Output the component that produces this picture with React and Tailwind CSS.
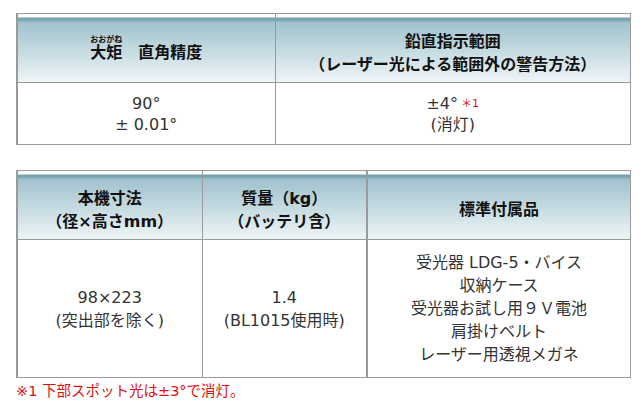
const HEAD_BG =
  "bg-[linear-gradient(to_bottom,#ffffff_0px,#ffffff_3px,#6f9cab_3px,#86adba_7px,#9fc1cc_7px,#eef5f7_100%)]";

const th = `border border-[#9a9a9a] ${HEAD_BG} text-center align-middle font-bold text-[16px] leading-[23px] text-[#111] pt-[9px]`;
const td = "border border-[#9a9a9a] bg-white text-center align-middle text-[16px] text-[#333]";

function Table1() {
  return (
    <table className="w-[615px] table-fixed border-collapse border-l-2 border-l-[#9a9a9a]">
      <colgroup>
        <col className="w-[258px]" />
        <col />
      </colgroup>
      <thead>
        <tr className="h-[69px]">
          <th className={th}>
            <ruby className="[ruby-position:over]">
              大矩<rt className="text-[8px] font-bold leading-[10px]">おおがね</rt>
            </ruby>
            {"　直角精度"}
          </th>
          <th className={th}>
            鉛直指示範囲
            <br />
            （レーザー光による範囲外の警告方法）
          </th>
        </tr>
      </thead>
      <tbody>
        <tr className="h-[62px]">
          <td className={`${td} leading-[21px]`}>
            90°
            <br />± 0.01°
          </td>
          <td className={`${td} leading-[21px]`}>
            ±4°
            <sup className="relative -top-[2px] ml-[3px] text-[11px] text-[#d7141c]">＊1</sup>
            <br />
            (消灯)
          </td>
        </tr>
      </tbody>
    </table>
  );
}

function Table2() {
  return (
    <table className="w-[615px] table-fixed border-collapse border-l-2 border-l-[#9a9a9a]">
      <colgroup>
        <col className="w-[185px]" />
        <col className="w-[165px]" />
        <col />
      </colgroup>
      <thead>
        <tr className="h-[69px]">
          <th className={th}>
            本機寸法
            <br />
            （径×高さmm）
          </th>
          <th className={`${th} border-r-2`}>
            質量（kg）
            <br />
            （バッテリ含）
          </th>
          <th className={th}>標準付属品</th>
        </tr>
      </thead>
      <tbody>
        <tr className="h-[138px]">
          <td className={`${td} leading-[23px]`}>
            98×223
            <br />
            (突出部を除く)
          </td>
          <td className={`${td} border-r-2 leading-[23px]`}>
            1.4
            <br />
            (BL1015使用時)
          </td>
          <td className={`${td} leading-[23px]`}>
            受光器 LDG-5・バイス
            <br />
            収納ケース
            <br />
            受光器お試し用９Ｖ電池
            <br />
            肩掛けベルト
            <br />
            レーザー用透視メガネ
          </td>
        </tr>
      </tbody>
    </table>
  );
}

export default function App() {
  return (
    <div
      className="min-h-[409px] w-[644px] bg-white pl-[16px] pt-[13px]"
      style={{ fontFamily: '"DejaVu Sans", "Noto Sans CJK JP", sans-serif' }}
    >
      <Table1 />
      <div className="mt-[25px]">
        <Table2 />
      </div>
      <p className="mt-[4px] text-[14.5px] leading-[18px] text-[#e01010]">※1 下部スポット光は±3°で消灯。</p>
    </div>
  );
}
